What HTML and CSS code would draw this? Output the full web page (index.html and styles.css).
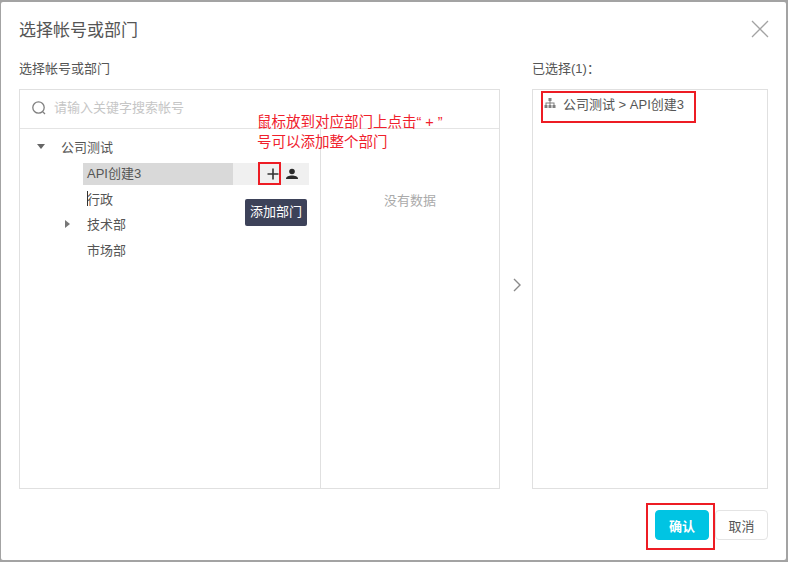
FILE: index.html
```html
<!DOCTYPE html>
<html lang="zh">
<head>
<meta charset="utf-8">
<title>选择帐号或部门</title>
<link rel="stylesheet" href="styles.css">
</head>
<body>
<div class="dialog">
  <header class="head">
    <h1 class="title">选择帐号或部门</h1>
    <svg class="close" width="18" height="18" viewBox="0 0 18 18"><path d="M1 1L17 17M17 1L1 17" stroke="#a3a3a3" stroke-width="1.3" fill="none"/></svg>
  </header>
  <div class="columns">
    <section class="col-left">
      <div class="label">选择帐号或部门</div>
      <div class="panel">
        <div class="search">
          <svg width="16" height="16" viewBox="0 0 16 16"><circle cx="7.5" cy="7.5" r="5.7" stroke="#808080" stroke-width="1.3" fill="none"/><path d="M11.6 11.6L14 14" stroke="#808080" stroke-width="1.3"/></svg>
          <span class="placeholder">请输入关键字搜索帐号</span>
        </div>
        <div class="panes">
          <div class="tree">
            <div class="node lvl0"><span class="caret-down"></span><span>公司测试</span></div>
            <div class="node lvl1 active">
              <span class="active-name">API创建3</span>
              <span class="actions">
                <svg width="14" height="14" viewBox="0 0 14 14"><path d="M7 1.5V12.5M1.500 7H12.500" stroke="#333" stroke-width="1.6"/></svg>
                <svg width="14" height="14" viewBox="0 0 14 14"><circle cx="7" cy="4.500" r="2.800" fill="#2b2b2b"/><path d="M1 12C1 9.300 4 8.500 7 8.500S13 9.300 13 12Z" fill="#2b2b2b"/></svg>
              </span>
            </div>
            <div class="node lvl1"><span class="cursor"></span><span>行政</span></div>
            <div class="node lvl1"><span class="caret-right"></span><span>技术部</span></div>
            <div class="node lvl1"><span>市场部</span></div>
          </div>
          <div class="empty"><span>没有数据</span></div>
        </div>
      </div>
    </section>
    <div class="arrow">
      <svg width="10" height="14" viewBox="0 0 10 14"><path d="M2 1L8 7L2 13" stroke="#8a8a8a" stroke-width="1.4" fill="none"/></svg>
    </div>
    <section class="col-right">
      <div class="label">已选择(1)：</div>
      <div class="panel selected">
        <div class="sel-item">
          <svg width="12" height="12" viewBox="0 0 12 12"><path d="M4.500 1H7.500V4H6.500V5.500H10.500V8H11.500V11H8.500V8H9.500V6.500H6.500V8H7.500V11H4.500V8H5.500V6.500H2.500V8H3.500V11H.5V8H1.500V5.500H5.500V4H4.500Z" fill="#808080"/></svg>
          <span>公司测试 &gt; API创建3</span>
        </div>
      </div>
    </section>
  </div>
  <footer class="foot">
    <button class="btn primary">确认</button>
    <button class="btn">取消</button>
  </footer>

  <div class="note">鼠标放到对应部门上点击“ + ”<br>号可以添加整个部门</div>
  <div class="tip">添加部门</div>
  <div class="mark mark-plus"></div>
  <div class="mark mark-sel"></div>
  <div class="mark mark-ok"></div>
</div>
</body>
</html>
```
FILE: styles.css
```css
* { box-sizing: border-box; }
html, body { margin: 0; height: 100%; }
body {
  background: #a3a3a3;
  padding: 2px 2px 2px 1px;
  font-family: "Liberation Sans", "Noto Sans CJK SC", sans-serif;
  color: #444;
  font-size: 13px;
  overflow: hidden;
}
.dialog {
  position: relative;
  height: 558px;
  background: #fff;
  border-radius: 2px;
  display: flex;
  flex-direction: column;
  padding: 0 18px;
}
.head {
  height: 57px;
  flex: none;
  display: flex;
  align-items: center;
  justify-content: space-between;
  padding-bottom: 4px;
}
.title { margin: 0; font-size: 17px; font-weight: 400; color: #555; }
.close { margin-right: -1px; margin-top: 1px; }
.columns { display: flex; height: 430px; flex: none; }
.col-left { width: 481px; display: flex; flex-direction: column; }
.col-right { width: 236px; display: flex; flex-direction: column; }
.label { height: 30px; line-height: 20px; color: #555; font-size: 13px; }
.panel {
  flex: 1;
  border: 1px solid #e0e0e0;
  display: flex;
  flex-direction: column;
  min-height: 0;
}
.search {
  height: 39px;
  flex: none;
  border-bottom: 1px solid #e4e4e4;
  display: flex;
  align-items: center;
  gap: 7px;
  padding: 0 0 2px 11px;
}
.placeholder { color: #c6c6c6; font-size: 13px; padding-bottom: 4px; }
.panes { flex: 1; display: flex; min-height: 0; }
.tree {
  width: 301px;
  border-right: 1px solid #e0e0e0;
  padding: 5px 11px 0 0;
}
.node {
  height: 25.500px;
  display: flex;
  align-items: center;
  position: relative;
  color: #555;
}
.lvl0 { padding-left: 41px; }
.lvl1 { margin-left: 63px; padding-left: 4px; }
.caret-down {
  position: absolute;
  left: 17px;
  top: 10px;
  border: 4px solid transparent;
  border-top: 5px solid #666;
  border-bottom: 0;
}
.caret-right {
  position: absolute;
  left: -18px;
  top: 9px;
  border: 4px solid transparent;
  border-left: 5px solid #777;
  border-right: 0;
}
.cursor { position: absolute; left: 4px; top: 5px; width: 1px; height: 15px; background: #333; }
.active { padding: 0; height: 22px; margin-top: 3px; margin-bottom: 1px; background: #f0f0f0; justify-content: space-between; }
.active-name {
  width: 150px;
  height: 22px;
  line-height: 22px;
  padding-left: 4px;
  background: #d9d9d9;
}
.actions { display: flex; align-items: center; gap: 5px; padding-right: 10px; }
.empty {
  flex: 1;
  display: flex;
  justify-content: center;
  padding-top: 61px;
  color: #aaa;
}
.arrow { width: 32px; display: flex; align-items: center; justify-content: center; padding: 22px 0 0 2px; }
.sel-item { display: flex; align-items: center; gap: 7px; padding: 2px 0 0 11px; height: 24px; color: #555; font-size: 13px; }
.foot {
  flex: 1;
  display: flex;
  justify-content: flex-end;
  align-items: flex-start;
  gap: 6px;
  padding-top: 21px;
}
.btn {
  width: 53px;
  height: 30px;
  padding: 0;
  font: inherit;
  font-size: 13px;
  color: #555;
  background: #fff;
  border: 1px solid #e4e4e4;
  border-radius: 4px;
}
.primary { width: 54px; background: #00c4e3; border-color: #00c4e3; color: #fff; font-weight: 700; }
.note {
  position: absolute;
  left: 256px;
  top: 110px;
  color: #f0202c;
  font-size: 14.500px;
  line-height: 20px;
  white-space: nowrap;
}
.tip {
  position: absolute;
  left: 244px;
  top: 197px;
  width: 62px;
  height: 27px;
  line-height: 26px;
  text-align: center;
  background: #3d4259;
  color: #fff;
  border-radius: 2px;
  font-size: 13px;
}
.mark { position: absolute; border: 2px solid #ed1c24; }
.mark-plus { left: 257px; top: 160px; width: 23px; height: 23px; }
.mark-sel { left: 540px; top: 89px; width: 155px; height: 32px; }
.mark-ok { left: 645px; top: 501px; width: 69px; height: 47px; }
```
